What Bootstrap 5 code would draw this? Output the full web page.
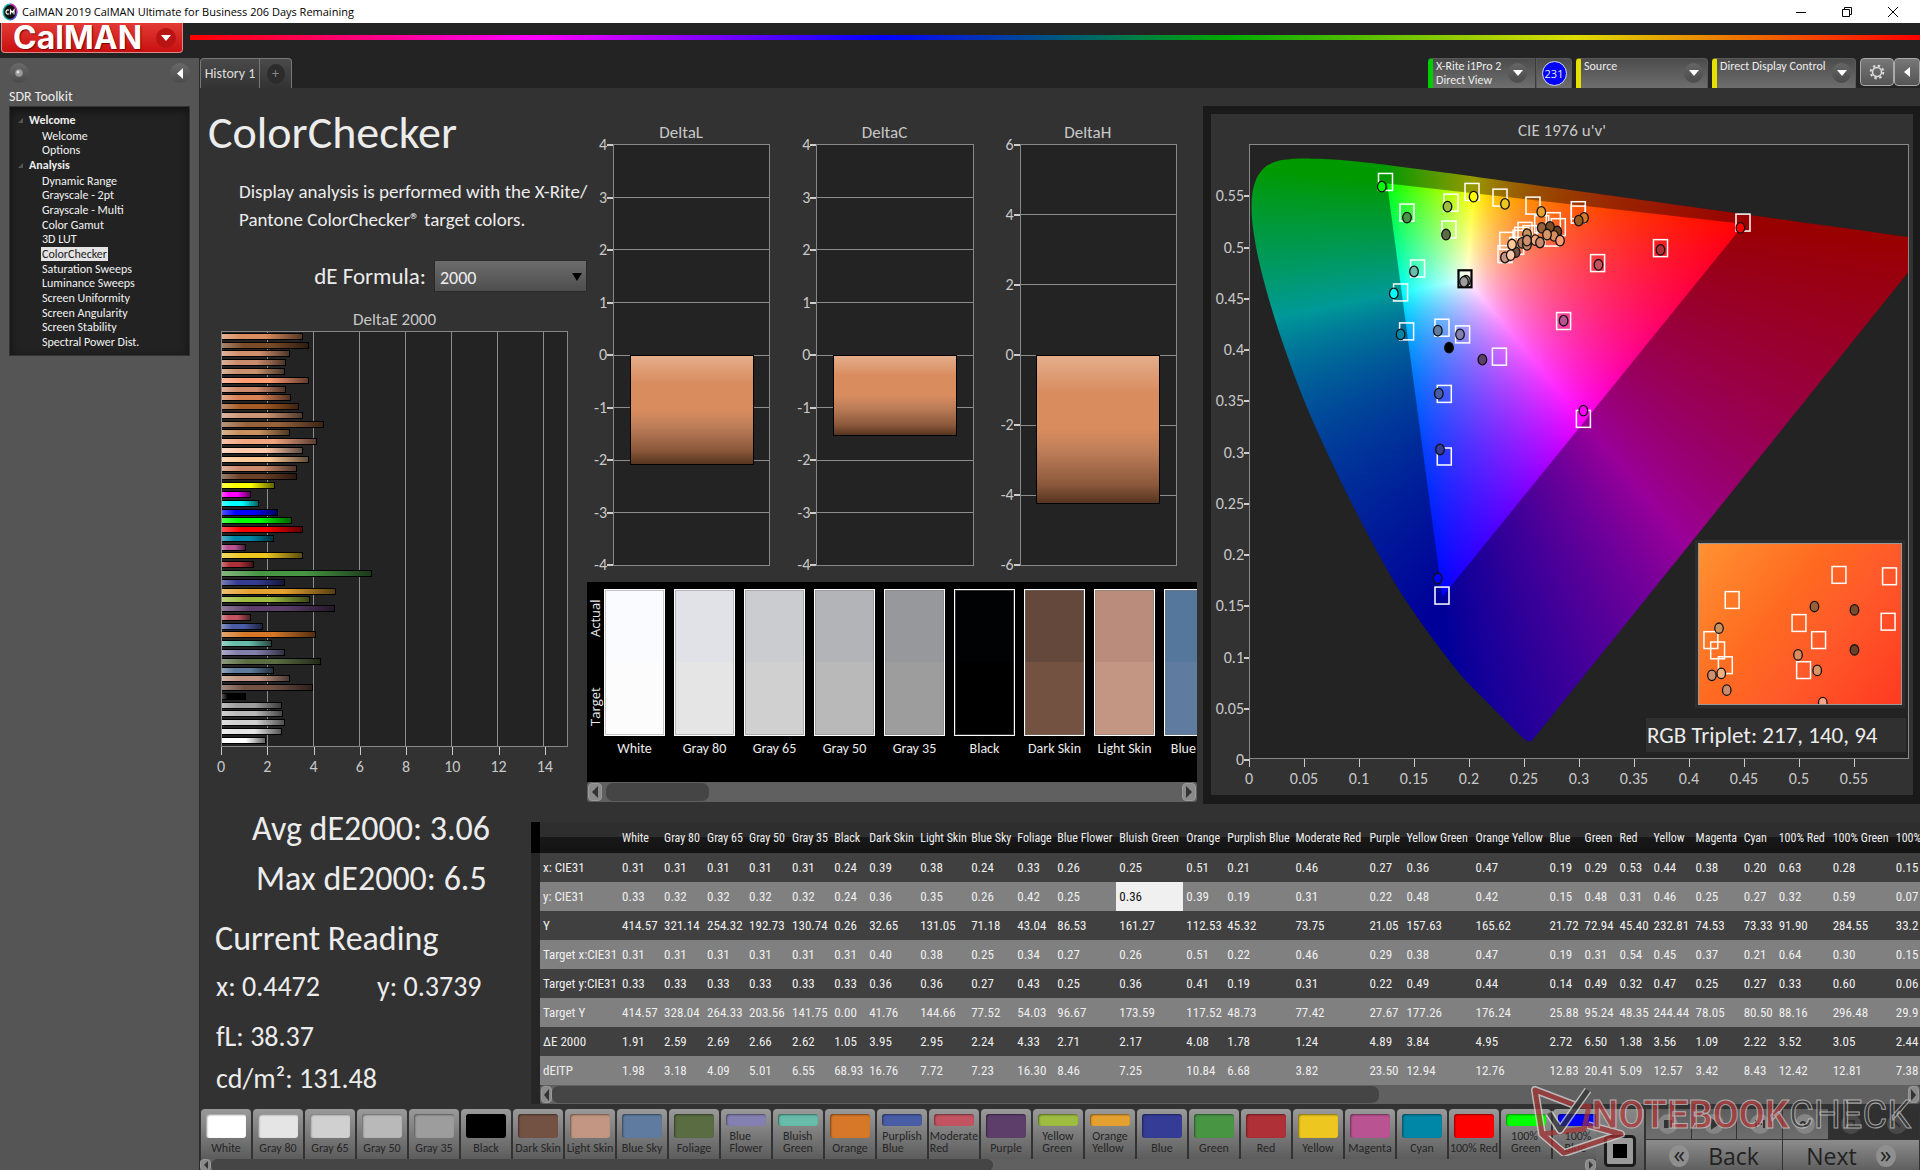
<!DOCTYPE html>
<html lang="en">
<head>
<meta charset="utf-8">
<meta name="viewport" content="width=device-width, initial-scale=1">
<title>CalMAN 2019</title>
<link href="https://cdn.jsdelivr.net/npm/bootstrap@5.3.0/dist/css/bootstrap.min.css" rel="stylesheet">
<style>
:root{--line:#888;--plot:#232323;--panel:#323232;--txt:#c8c8c8}
body{background:#232323;color:#ececec;font-family:Carlito,Lato,"Open Sans",sans-serif;font-size:16px;line-height:24px;min-height:100vh;overflow:hidden}
button{border:0;padding:0;background:none;color:inherit;font:inherit}
/* window frame */
.titlebar{height:23px;background:#fff;color:#000;font:11px/23px "Open Sans","Noto Sans",sans-serif;padding-left:2px}
.titlebar svg{display:block}
.winbtn{width:46px;height:23px}
.brandbar{height:35px}
.brand{width:182px;height:30px;margin-left:1px;border:1px solid #d88;border-top:0;border-radius:0 0 4px 4px;background:linear-gradient(#e33b36,#c8100f);font:700 32px/30px Inter,"Open Sans",sans-serif;color:#fff;padding:0 6px 0 11px;text-shadow:1px 1px 1px #700}
.brand .dot{width:20px;height:20px;background:#b81414}
.rainbow{height:5px;margin:12px 0 0 7px;background:linear-gradient(90deg,#f00,#f0f 20%,#00f 40%,#0a0 60%,#dd0 80%,#f00)}
/* sidebar */
.side{width:200px;background:#555;border-right:1px solid #2a2a2a}
.side .rnd{width:20px;height:20px;background:linear-gradient(#6a6a6a,#4a4a4a)}
.sidehead{height:29px;padding:5px 9px 0}
.sidename{font-size:14px;line-height:19px;padding-left:9px}
.tree{margin:0 9px;height:250px;background:#222;border:1px solid #333;box-shadow:inset 0 3px 8px #111;padding:6px 0 6px 19px;font-size:12px}
.tree a{color:#f2f2f2;text-decoration:none;display:block;width:max-content;line-height:14px;margin-left:12px;padding:0 1px}
.tree a.on{background:#e4e4e4;color:#222}
.tree b{line-height:15px;font-weight:700;font-size:12px;display:flex;align-items:center}
.tree b svg{margin-left:-11px;margin-right:6px}
/* tabs and devices */
.tabbar{height:30px;background:#232323}
.htab{border:1px solid #777;border-bottom:0;border-radius:4px 4px 0 0;background:linear-gradient(#4a4a4a,#333);font-size:14px;color:#ddd}
.htab button+button{border-left:1px solid #777;width:32px}
.htab button:first-child{width:58px}
.plus{width:18px;height:20px;background:#2c2c2c;color:#888;line-height:20px}
.dev{height:30px;border-radius:4px 4px 0 0;border:1px solid #5a5a5a;border-bottom:0;border-left:5px solid #e6e000;background:linear-gradient(#4c4c4c,#6e6e6e);font-size:12px;line-height:14px;padding-left:3px;text-align:left}
.dev.g{border-left-color:#0c0;border-radius:4px 0 0 0;border-right-color:#3a3a3a}
.dev.num{border-left:1px solid #5a5a5a;border-radius:0 4px 0 0}
.drop{width:19px;height:20px;border-radius:50%;background:linear-gradient(#666,#4a4a4a)}
.cnt{width:25px;height:25px;border-radius:50%;background:#00f;border:1px solid #ddd;font:11px/23px "Open Sans",sans-serif;text-align:center}
.gear{height:28px;border:1px solid #aaa;border-radius:4px;background:linear-gradient(#777,#555)}
/* work area */
.work{background:var(--panel)}
.colA{flex:387 1 0;min-width:0}.colB{flex:616 1 0;min-width:0}.colC{flex:717 1 0;min-width:0}
h1{font-size:46px;line-height:56px;font-weight:400;margin:0}
.desc{font-size:19px;line-height:28px;padding:18px 0 0 39px;margin:0;white-space:nowrap}
.formula{height:32px;margin-top:26px}
.formula label{font-size:23px;line-height:32px}
.formula select{width:153px;height:32px;font-size:18px;line-height:24px;color:#eee;border:1px solid #2a2a2a;border-radius:0;padding:4px 5px 0;appearance:none;background:linear-gradient(#6c6c6c,#4e4e4e)}
.formula .arr{right:5px;top:13px}
.ctitle{font-size:17px;line-height:22px;color:var(--txt);text-align:center}
.plot{border:1px solid var(--line);background:var(--plot);position:relative}
.deplot{height:416px}
.deplot .gcell+.gcell{border-left:1px solid #8d8d8d}
.bars{inset:0 0 1px 0}
.bar{height:7px;border:1px solid #000;border-left:0}
.shade{background-image:linear-gradient(90deg,rgba(255,255,255,.32),transparent 25%,transparent 55%,rgba(0,0,0,.62))}
.xax{color:var(--txt)}
.xax .cell{flex:2 1 0;min-width:0}.xax .half{flex:1 1 0}
.xax i{display:block;width:1px;height:8px;background:#ccc}
.xax span{display:block;text-align:center;margin-left:-100%;width:200%}
.vplot{height:422px}
.vax{width:21px;margin:-11px 0;color:var(--txt);text-align:right}
.vax div{display:flex;align-items:center;justify-content:flex-end}
.vax i{width:6px;height:2px;background:#ccc}
.vgrid>div{flex:1}.vgrid>div+div{border-top:1px solid #8d8d8d}
.vbar{left:10%;width:80%;top:50%;border:1px solid #000;background:linear-gradient(#e4ae8c,#d98c5e 25%,#d98c5e 50%,#bb7c58 66%,#8a573a 88%,#55341f)}
/* swatch strip */
.strip{height:200px;background:#000;font-size:14px}
.strip .vert{writing-mode:vertical-rl;transform:rotate(180deg);font:13px/16px "Open Sans",sans-serif;width:17px;height:147px;margin-top:7px;padding:10px 0;flex:none}
.sw{width:70px;flex:none}
.sw div{width:61px;height:147px;border:1px solid #fff;outline:1px solid rgba(120,120,120,.4);outline-offset:-2px}
.sw span{display:block;width:61px;text-align:center;line-height:26px;white-space:nowrap}
.sbar{background:#606060;border-radius:3px}
.sbar button{width:14px;background:#8a8a8a;border:1px solid #999;border-radius:4px;flex:none;display:flex;align-items:center;justify-content:center}
.sbar .thumb{background:#454545;border-radius:7px}
/* chromaticity */
.cie{background:#1a1a1a;padding:8px 7px 9px 8px}
.cie .inner{background:var(--panel);padding-top:6px}
.cie .ctitle{padding-bottom:2px}
.cieplot{height:615px}
.cieplot canvas,.cieplot svg.ov{position:absolute;left:0;top:0;width:100%;height:100%}
.yax{width:38px;color:var(--txt)}
.yax div{flex:1;display:flex;align-items:flex-end;justify-content:flex-end}
.yax span{margin-bottom:-13px;display:flex;align-items:center}
.yax i{width:5px;height:2px;background:#ccc}
.inset-map{right:3px;bottom:50px;width:210px;height:168px;border:3px solid #2d2d2d}
.inset-map svg{display:block;width:100%;height:100%;border:1px solid #999;background:linear-gradient(128deg,#ff9232,#ff6a20 40%,#ff5a2a 62%,#ff3a20)}
.triplet{right:2px;bottom:6px;width:260px;height:34px;background:#303030;font-size:23px;line-height:34px;padding-left:1px}
/* readings */
.stats{flex:331 1 0;min-width:0}
.stats .big{font-size:34px}.stats .mid{font-size:28px}
.lh50{line-height:50px}.lh42{line-height:42px}
/* table */
.tblwrap{flex:1389 1 0;min-width:0}
.gut{width:9px;flex:none;background:#262626}.gut div{height:31px;background:#000}
.readings{table-layout:fixed;width:100%;border-collapse:collapse;font:13px/28px "Roboto Condensed",Carlito,Roboto,sans-serif;color:#eee}
.readings th,.readings td{padding:0 0 0 3px;white-space:nowrap;overflow:hidden;font-weight:400;height:29px}
.readings thead th{height:31px;background:linear-gradient(#2e2e2e 50%,#181818 50%,#131313);line-height:30px;font-size:12px}
.readings tbody tr{background:#404040}.readings tbody tr:nth-child(even){background:#808080}
.readings td.cur{background:#f0f0f0;color:#111}
/* pattern buttons */
.pat{width:50px;height:50px;flex:none;border-radius:4px 4px 0 0;background:linear-gradient(#9a9a9a,#5c5c5c);color:#262626;font-size:12px;line-height:12px;padding-top:5px;white-space:nowrap;overflow:hidden}
.pat i{display:block;width:40px;height:24px;border-radius:3px;box-shadow:inset 1px 1px 2px rgba(0,0,0,.45)}
.pat.two i{height:12px}
.pat.two{text-align:left}
.pat span{display:block;padding-top:4px;line-height:12px}
.ctl{width:324px;background:#333}
.act{flex:1;height:30px;background:linear-gradient(#5e5e5e,#6e6e6e);border-right:1px solid #333}
.act.off{background:#303030}
.act span{width:20px;height:20px;background:#858585;border-radius:50%}
.nav2{height:31px;flex:1;gap:19px;background:linear-gradient(#8c8c8c,#5e5e5e);color:#222;font:23px/30px "Open Sans",sans-serif;border-right:1px solid #333}
.nav2 .ch{width:20px;height:22px;border-radius:50%;background:#8f8f8f;line-height:18px}
.wm{right:9px;bottom:15px;opacity:.72;pointer-events:none}
.wm svg{margin-right:-36px}
.wm span{font-size:38px;line-height:40px;margin-top:9px;font-family:Roboto,"Open Sans",sans-serif;-webkit-text-stroke:1px #ccc}
.wm .nb{font-weight:700;color:#b4383a}
.wm .ck{color:#333}
</style>
<script src="https://cdn.jsdelivr.net/npm/bootstrap@5.3.0/dist/js/bootstrap.bundle.min.js"></script>
</head>
<body class="d-flex flex-column">
<header>
  <div class="titlebar d-flex align-items-center">
    <svg width="16" height="18" viewBox="0 0 16 18"><ellipse cx="8" cy="9" rx="7.5" ry="8.5" fill="#17b3a0"/><path d="M8 .5A7.5 8.5 0 0 1 15.500 9H8z" fill="#d22bb0"/><path d="M8 17.500A7.500 8.500 0 0 0 15.500 9H8z" fill="#6a49d8"/><ellipse cx="8" cy="9" rx="6" ry="7" fill="#111"/><path d="M7 7.300a2 2 0 1 0 0 3.400M8.500 11.500V7l1.800 2.500L12 7v4.500" fill="none" stroke="#fff" stroke-width="1.200"/></svg>
    <span class="ms-1 flex-grow-1">CalMAN 2019 CalMAN Ultimate for Business 206 Days Remaining</span>
    <button class="winbtn" aria-label="Minimize"><svg class="mx-auto" width="10" height="10"><path d="M0 5.500h10" stroke="#000"/></svg></button>
    <button class="winbtn" aria-label="Restore"><svg class="mx-auto" width="10" height="10"><path d="M.5 2.500h7v7h-7zM2.500 2.500v-2h7v7h-2" fill="none" stroke="#000"/></svg></button>
    <button class="winbtn me-1" aria-label="Close"><svg class="mx-auto" width="10" height="10"><path d="M0 0l10 10M10 0L0 10" stroke="#000"/></svg></button>
  </div>
  <div class="brandbar d-flex">
    <button class="brand d-flex justify-content-between align-items-center">CalMAN<span class="dot rounded-circle d-flex align-items-center justify-content-center"><svg width="10" height="6"><path d="M0 0h10L5 6z" fill="#fff"/></svg></span></button>
    <div class="rainbow flex-grow-1"></div>
  </div>
</header>
<div class="d-flex flex-grow-1">
  <nav class="side flex-shrink-0">
    <div class="sidehead d-flex justify-content-between">
      <button class="rnd rounded-circle d-flex align-items-center justify-content-center" aria-label="Status"><svg width="8" height="8"><circle cx="4" cy="4" r="3.800" fill="#999"/><circle cx="3" cy="3" r="1.500" fill="#ddd"/></svg></button>
      <button class="rnd rounded-circle d-flex align-items-center justify-content-center" aria-label="Collapse"><svg width="6" height="11"><path d="M6 0v11L0 5.500z" fill="#fff"/></svg></button>
    </div>
    <div class="sidename">SDR Toolkit</div>
    <div class="tree d-flex flex-column justify-content-between" id="tree"></div>
  </nav>
  <main class="flex-grow-1 d-flex flex-column" style="min-width:0">
    <div class="tabbar d-flex justify-content-between">
      <div class="htab d-flex"><button>History 1</button><button aria-label="Add tab" class="d-flex align-items-center justify-content-center"><span class="plus rounded-circle">+</span></button></div>
      <div class="d-flex gap-1">
        <div class="d-flex">
          <button class="dev g d-flex" style="width:108px"><span class="flex-grow-1">X-Rite i1Pro 2<br>Direct View</span><span class="drop mt-1 me-2 d-flex align-items-center justify-content-center"><svg width="10" height="6"><path d="M0 0h10L5 6z" fill="#fff"/></svg></span></button>
          <div class="dev num d-flex align-items-center justify-content-center p-0" style="width:36px"><span class="cnt">231</span></div>
        </div>
        <button class="dev d-flex" style="width:132px"><span class="flex-grow-1">Source</span><span class="drop mt-1 me-1 d-flex align-items-center justify-content-center"><svg width="10" height="6"><path d="M0 0h10L5 6z" fill="#fff"/></svg></span></button>
        <button class="dev d-flex" style="width:144px"><span class="flex-grow-1 text-nowrap">Direct Display Control</span><span class="drop mt-1 me-1 d-flex align-items-center justify-content-center"><svg width="10" height="6"><path d="M0 0h10L5 6z" fill="#fff"/></svg></span></button>
        <div class="d-flex">
          <button class="gear d-flex align-items-center justify-content-center" style="width:34px" aria-label="Settings"><svg width="16" height="16" viewBox="0 0 16 16" fill="none" stroke="#ddd"><circle cx="8" cy="8" r="4.500" stroke-width="1.500"/><circle cx="8" cy="8" r="6.300" stroke-width="2" stroke-dasharray="2.400 2.550"/></svg></button>
          <button class="gear d-flex align-items-center justify-content-center" style="width:26px" aria-label="Hide panel"><svg width="6" height="10"><path d="M6 0v10L0 5z" fill="#fff"/></svg></button>
        </div>
      </div>
    </div>
    <div class="work flex-grow-1 d-flex flex-column">
      <div class="d-flex">
        <section class="colA d-flex flex-column" style="padding-top:16px">
          <h1 class="ps-2">ColorChecker</h1>
          <p class="desc">Display analysis is performed with the X-Rite/<br>Pantone ColorChecker® target colors.</p>
          <div class="formula d-flex justify-content-end gap-2 position-relative"><label for="de">dE Formula:</label><select id="de"><option>2000</option></select><svg class="arr position-absolute" width="10" height="8"><path d="M0 0h10L5 8z" fill="#000"/></svg></div>
          <div style="padding:17px 19px 0 21px">
            <div class="ctitle">DeltaE 2000</div>
            <div class="plot deplot d-flex" id="deplot"></div>
            <div class="xax d-flex" id="dex"></div>
          </div>
        </section>
        <section class="colB"><div style="padding:34px 6px 0 0">
          <div class="d-flex" id="deltas"></div>
          <div class="strip d-flex overflow-hidden" style="margin-top:16px" id="strip">
            <div class="vert d-flex justify-content-between"><span>Target</span><span>Actual</span></div>
          </div>
          <div class="sbar d-flex" style="height:20px;padding:1px"><button aria-label="Scroll left"><svg width="6" height="12"><path d="M6 0v12L0 6z" fill="#333"/></svg></button><div class="thumb ms-1" style="width:17%"></div><button class="ms-auto" aria-label="Scroll right"><svg width="6" height="12"><path d="M0 0v12l6-6z" fill="#333"/></svg></button></div>
        </div></section>
        <section class="colC" style="padding-top:18px">
          <div class="cie"><div class="inner">
            <div class="ctitle">CIE 1976 u'v'</div>
            <div class="d-flex" style="padding-right:4px">
              <div class="yax d-flex flex-column-reverse" id="ciey"></div>
              <div class="plot cieplot flex-grow-1" id="cieplot">
                <canvas id="cv" width="658" height="614"></canvas>
                <svg class="ov" viewBox="0 0 658 614" preserveAspectRatio="none" id="ov"></svg>
                <div class="inset-map position-absolute"><svg viewBox="0 0 204 162" preserveAspectRatio="none" id="ins"></svg></div>
                <div class="triplet position-absolute">RGB Triplet: 217, 140, 94</div>
              </div>
            </div>
            <div class="xax d-flex" id="ciex" style="margin-left:38px;padding:0 4px 4px 0"></div>
          </div></div>
        </section>
      </div>
      <div class="d-flex flex-grow-1">
        <section class="stats">
          <div class="big lh50" style="padding-left:52px">Avg dE2000: 3.06</div>
          <div class="big lh50" style="padding-left:56px">Max dE2000: 6.5</div>
          <div class="big lh42" style="padding:14px 0 6px 15px">Current Reading</div>
          <div class="mid lh42 d-flex ps-3"><span style="width:161px">x: 0.4472</span><span>y: 0.3739</span></div>
          <div class="mid lh42 ps-3 pt-2">fL: 38.37</div>
          <div class="mid lh42 ps-3">cd/m²: 131.48</div>
        </section>
        <section class="tblwrap d-flex" style="padding-top:18px">
          <div class="gut"><div></div></div>
          <div class="flex-grow-1" style="min-width:0">
            <table class="readings" id="tbl"></table>
            <div class="sbar d-flex" style="height:19px;padding:1px"><button style="width:11px" aria-label="Scroll left"><svg width="5" height="12"><path d="M5 0v12L0 6z" fill="#333"/></svg></button><div class="thumb" style="width:60%"></div><button class="ms-auto" style="width:11px" aria-label="Scroll right"><svg width="5" height="12"><path d="M0 0v12l5-6z" fill="#333"/></svg></button></div>
          </div>
        </section>
      </div>
      <div class="d-flex position-relative" style="padding-top:5px">
        <div class="flex-grow-1" style="min-width:0">
          <div class="d-flex overflow-hidden" style="gap:2px;padding-left:1px" id="pats"></div>
          <div class="sbar d-flex" style="height:12px"><button style="width:11px" aria-label="Scroll left"><svg width="4" height="8"><path d="M4 0v8L0 4z" fill="#333"/></svg></button><div class="thumb" style="width:56%"></div><button class="ms-auto" style="width:11px" aria-label="Scroll right"><svg width="4" height="8"><path d="M0 0v8l4-4z" fill="#333"/></svg></button></div>
        </div>
        <div class="ctl d-flex flex-shrink-0">
          <button class="d-flex align-items-end justify-content-center pb-1" style="width:48px;background:linear-gradient(#888,#5a5a5a)" aria-label="Pattern window"><svg width="32" height="32"><rect x="1.500" y="1.500" width="29" height="29" rx="3" fill="#9a9a9a" stroke="#1a1a1a" stroke-width="3"/><rect x="9" y="9" width="14" height="14" fill="#000"/></svg></button>
          <div class="flex-grow-1" style="padding-left:2px">
            <div class="d-flex" id="acts"></div>
            <div class="d-flex" style="margin-top:1px">
              <button class="nav2 d-flex align-items-center justify-content-center"><span class="ch">«</span>Back</button>
              <button class="nav2 d-flex align-items-center justify-content-center">Next<span class="ch">»</span></button>
            </div>
          </div>
        </div>
        <div class="wm position-absolute d-flex align-items-start">
          <svg width="96" height="70" viewBox="0 0 96 70"><g fill="none" stroke-linejoin="round"><path d="M46 20L4 4l7 44 22 19 57-19-33-9" stroke="#ddd" stroke-width="8"/><path d="M46 20L4 4l7 44 22 19 57-19-33-9M11 48l42-5 5-23-12 0" stroke="#a83234" stroke-width="5"/><path d="M18 27l11 17L57 4" stroke="#ddd" stroke-width="8"/><path d="M18 27l11 17L57 4" stroke="#333" stroke-width="5"/></g></svg>
          <span class="nb">NOTEBOOK</span><span class="ck">CHECK</span>
        </div>
      </div>
    </div>
  </main>
</div>
<script>
const $=id=>document.getElementById(id);
// navigation tree
$('tree').innerHTML=[['Welcome'],'Welcome','Options',['Analysis'],'Dynamic Range','Grayscale - 2pt','Grayscale - Multi','Color Gamut','3D LUT','ColorChecker','Saturation Sweeps','Luminance Sweeps','Screen Uniformity','Screen Angularity','Screen Stability','Spectral Power Dist.'].map(t=>Array.isArray(t)?`<b><svg width="5" height="5"><path d="M5 0v5H0z" fill="#555"/></svg>${t[0]}</b>`:`<a href="#"${t==='ColorChecker'?' class="on"':''}>${t}</a>`).join('');
// DeltaE bars
const de=[[3.5,'#d98c5e'],[3.8,'#7a4b28'],[2.95,'#cf8f6c'],[2.77,'#c98c6c'],[2.72,'#c8916c'],[3.77,'#ff9c74'],[2.77,'#cf8c6c'],[3.02,'#d98256'],[3.33,'#a35a24'],[3.5,'#cc9474'],[4.43,'#96623a'],[2.95,'#c8915e'],[4.12,'#f0a480'],[3.5,'#ffc8aa'],[3.8,'#ffc896'],[3.25,'#cc8a6c'],[3.25,'#6b4026'],[2.29,'#ffff00'],[1.28,'#ff00ff'],[1.63,'#00ffff'],[2.45,'#0000ff'],[3.03,'#00ff00'],[3.51,'#ff0000'],[2.24,'#0086a6'],[1.06,'#b95392'],[3.54,'#edc720'],[1.37,'#b03038'],[6.5,'#489544'],[2.72,'#343c93'],[4.97,'#e5a12f'],[3.84,'#9dbc40'],[4.9,'#5d3e6b'],[1.24,'#c35360'],[1.8,'#495ca6'],[4.07,'#d67828'],[2.16,'#67bdaa'],[2.72,'#8480ae'],[4.3,'#5a6c42'],[2.24,'#5f7b9d'],[2.95,'#c29682'],[3.94,'#735244'],[1.06,'#000000'],[2.6,'#9e9e9e'],[2.65,'#b9b9b9'],[2.72,'#d0d0d0'],[2.6,'#e5e5e5'],[1.91,'#ffffff']];
let g='';for(let i=0;i<8;i++)g+=`<div class="gcell" style="flex:${i<7?2:1} 1 0"></div>`;
$('deplot').innerHTML=g+'<div class="bars position-absolute d-flex flex-column justify-content-around">'+de.map(([v,c])=>`<div class="bar shade" style="width:${v/15*100}%;background-color:${c}"></div>`).join('')+'</div>';
$('dex').innerHTML=[0,2,4,6,8,10,12,14].map(n=>`<div class="cell${n===14?' half':''}"><i></i><span${n===14?' style="width:400%;margin-left:-200%"':' style="width:100%;margin-left:-50%"'}>${n}</span></div>`).join('');
// DeltaL / C / H
$('deltas').innerHTML=[['DeltaL',[4,3,2,1,0,-1,-2,-3,-4],2.1],['DeltaC',[4,3,2,1,0,-1,-2,-3,-4],1.55],['DeltaH',[6,4,2,0,-2,-4,-6],4.26]].map(([t,l,v])=>`<div style="flex:1;padding:0 20px 0 5px"><div class="ctitle">${t}</div><div class="d-flex"><div class="vax d-flex flex-column justify-content-between">${l.map(n=>`<div>${n}<i></i></div>`).join('')}</div><div class="plot vplot vgrid flex-grow-1 d-flex flex-column">${'<div></div>'.repeat(l.length-1)}<span class="vbar position-absolute" style="height:${v/l[0]*50}%"></span></div></div></div>`).join('');
// actual / target strip
$('strip').insertAdjacentHTML('beforeend',[['White','#fafbff','#fcfcfc'],['Gray 80','#e1e2e8','#e5e5e5'],['Gray 65','#cbccd0','#d0d0d0'],['Gray 50','#b3b4b8','#b9b9b9'],['Gray 35','#97989b','#9d9d9d'],['Black','#010203','#000'],['Dark Skin','#64483c','#735242'],['Light Skin','#b98c7c','#c29682'],['Blue Sky','#54779b','#5f7b9f']].map(([n,a,t])=>`<div class="sw" style="padding-top:7px"><div style="background:linear-gradient(${a} 50%,${t} 50%)"></div><span>${n}</span></div>`).join(''));
// chromaticity axes
const tk=[0,.05,.1,.15,.2,.25,.3,.35,.4,.45,.5,.55];
$('ciey').innerHTML=tk.map(n=>`<div><span>${n}<i></i></span></div>`).join('');
$('ciex').innerHTML=tk.map(n=>`<div class="cell"><i></i><span style="width:100%;margin-left:-50%">${n}</span></div>`).join('');
// chromaticity diagram
(function(){
 const W=658,H=614,cv=$('cv'),ctx=cv.getContext('2d');
 const loc=[[.1741,.005],[.1714,.0051],[.1689,.0069],[.1644,.0109],[.1566,.0177],[.144,.0297],[.1241,.0578],[.1096,.0868],[.0913,.1327],[.0687,.2007],[.0454,.295],[.0235,.4127],[.0082,.5384],[.0039,.6548],[.0139,.7502],[.0389,.812],[.0743,.8338],[.1142,.8262],[.1547,.8059],[.2296,.7543],[.3016,.6923],[.3731,.6245],[.4441,.5547],[.5125,.4866],[.5752,.4242],[.627,.3725],[.6658,.334],[.6915,.3083],[.719,.2809],[.7347,.2653]];
 const P=(u,v)=>[u/.6*W,H-v/.6*H];
 const layer=k=>{const c=document.createElement('canvas');c.width=W;c.height=H;const x=c.getContext('2d'),im=x.createImageData(W,H),d=im.data;
  for(let j=0;j<H;j++)for(let i=0;i<W;i++){const u=(i+.5)/W*.6,v=(H-j-.5)/H*.6,q=6*u-16*v+12,X=9*u/q,y=4*v/q,Z=1-X-y;
   const c3=[3.2406*X-1.5372*y-.4986*Z,-.9689*X+1.8758*y+.0415*Z,.0557*X-.204*y+1.057*Z].map(t=>Math.max(t,0));
   const m=Math.max(...c3),o=(j*W+i)*4;for(let n=0;n<3;n++)d[o+n]=255*k*Math.pow(c3[n]/m,1/1.2);d[o+3]=255;}
  x.putImageData(im,0,0);return c;};
 const clip=(pts,img)=>{ctx.save();ctx.beginPath();pts.forEach((p,i)=>i?ctx.lineTo(...p):ctx.moveTo(...p));ctx.closePath();ctx.clip();ctx.drawImage(img,0,0);ctx.restore();};
 const L=loc.map(([x,y])=>{const q=-2*x+12*y+3;return P(4*x/q,9*y/q);}),S=[];
 for(let i=0;i<L.length-1;i++){const a=L[Math.max(i-1,0)],b=L[i],c=L[i+1],e=L[Math.min(i+2,L.length-1)];
  for(let t=0;t<1;t+=.125)S.push([0,1].map(n=>.5*(2*b[n]+(c[n]-a[n])*t+(2*a[n]-5*b[n]+4*c[n]-e[n])*t*t+(3*b[n]-a[n]-3*c[n]+e[n])*t*t*t)));}
 S.push(L[L.length-1]);
 clip(S,layer(.6));
 clip([P(.4507,.5229),P(.125,.5625),P(.1754,.1579)],layer(1));
 const sq=a=>a.map(([x,y])=>`<rect x="${x-7}" y="${y-8.5}" width="14" height="17" fill="none" stroke="#fff" stroke-width="1.5"/>`).join('');
 const ci=a=>a.map(([x,y,c])=>`<ellipse cx="${x}" cy="${y}" rx="4.300" ry="5.300" fill="${c}" stroke="#111" stroke-width="1.300"/>`).join('');
 $('ov').innerHTML=sq([[135.5,37],[157,67.7],[201,57.7],[222,47],[250,52.7],[199,84.7],[167.6,123.7],[150.6,147.7],[156.6,186.7],[192,183],[212.6,189.7],[249.4,212],[194.3,249.3],[283,60.7],[328.3,65.3],[328.3,69.7],[493,77.7],[410.5,103.3],[347.6,118.3],[313.6,176.3],[194.3,312],[192,451.3],[333.4,274.3],[256.7,96],[255,109.3],[275,86],[303.3,76.3],[308.3,82.3],[291.7,79.3],[266.7,101],[270,94],[271.7,91],[301.7,92.7],[280,89.3]])
 +'<rect x="208.5" y="125.500" width="13" height="17" fill="none" stroke="#000" stroke-width="2.200"/>'
 +ci([[131.8,41.7,'#00ff00'],[157,72.7,'#489544'],[197.5,61.7,'#9dbc40'],[223.6,51.7,'#ffff00'],[255,59,'#edc720'],[196,89.7,'#5a6c42'],[164,126.7,'#67bdaa'],[143.8,148.7,'#00ffff'],[150.6,189.7,'#0086a6'],[187.8,186,'#5f7b9d'],[210,189.7,'#8480ae'],[199,203,'#000'],[232.4,215,'#5d3e6b'],[188.8,249,'#495ca6'],[348.5,120,'#c35360'],[410.5,105,'#b03038'],[490.4,83,'#f00'],[313.6,176,'#b95392'],[216,136,'#9e9e9e'],[214,137,'#9e9e9e'],[190,305,'#343c93'],[187.8,434,'#0000ff'],[333.4,266,'#f0f'],[291.3,67,'#e5a12f'],[334,73,'#d67828'],[328.7,75.7,'#9c5a20'],[291.7,83,'#96603a'],[307.3,86.7,'#6b4026'],[300,82,'#7a4b28'],[304,91,'#d98c5e'],[297,89.7,'#d99468'],[310,95.7,'#ff9c74'],[277,89.3,'#c8915e'],[272,98,'#b07c5a'],[277,100,'#c08860'],[285.3,95.3,'#f0a880'],[277,95.7,'#cf9070'],[290,97.7,'#cc8a6c'],[265.7,107.3,'#735244'],[262,99.7,'#ffc896'],[255,112.7,'#c29682'],[260.7,110.3,'#ffc8aa']]);
 $('ins').innerHTML=sq([[141.4,31.3],[192.4,32.7],[33.5,56.7],[101,80],[191,78.7],[12,97.3],[18.8,107.7],[26.6,122.7],[120.8,97.3],[105.6,127.7]])+ci([[116.6,63.3,'#96603a'],[157,66.7,'#7a4b28'],[157,107.3,'#6b4026'],[20.2,85.3,'#c8915e'],[100,112.3,'#d98c5e'],[119.4,128,'#d99468'],[13,133,'#cf9070'],[22.5,131,'#f0b080'],[28,148,'#cc8a6c'],[125,160.7,'#ffa484']]);
})();
// readings table
const cols=['','White','Gray 80','Gray 65','Gray 50','Gray 35','Black','Dark Skin','Light Skin','Blue Sky','Foliage','Blue Flower','Bluish Green','Orange','Purplish Blue','Moderate Red','Purple','Yellow Green','Orange Yellow','Blue','Green','Red','Yellow','Magenta','Cyan','100% Red','100% Green','100% Blue'];
const cw=[79,42,43,42,43,42,35,51,51,46,40,62,67,41,68,74,37,69,74,35,35,34,42,48,35,54,63];
const rows=`x: CIE31|0.31|0.31|0.31|0.31|0.31|0.24|0.39|0.38|0.24|0.33|0.26|0.25|0.51|0.21|0.46|0.27|0.36|0.47|0.19|0.29|0.53|0.44|0.38|0.20|0.63|0.28|0.15
y: CIE31|0.33|0.32|0.32|0.32|0.32|0.24|0.36|0.35|0.26|0.42|0.25|0.36|0.39|0.19|0.31|0.22|0.48|0.42|0.15|0.48|0.31|0.46|0.25|0.27|0.32|0.59|0.07
Y|414.57|321.14|254.32|192.73|130.74|0.26|32.65|131.05|71.18|43.04|86.53|161.27|112.53|45.32|73.75|21.05|157.63|165.62|21.72|72.94|45.40|232.81|74.53|73.33|91.90|284.55|33.2
Target x:CIE31|0.31|0.31|0.31|0.31|0.31|0.31|0.40|0.38|0.25|0.34|0.27|0.26|0.51|0.22|0.46|0.29|0.38|0.47|0.19|0.31|0.54|0.45|0.37|0.21|0.64|0.30|0.15
Target y:CIE31|0.33|0.33|0.33|0.33|0.33|0.33|0.36|0.36|0.27|0.43|0.25|0.36|0.41|0.19|0.31|0.22|0.49|0.44|0.14|0.49|0.32|0.47|0.25|0.27|0.33|0.60|0.06
Target Y|414.57|328.04|264.33|203.56|141.75|0.00|41.76|144.66|77.52|54.03|96.67|173.59|117.52|48.73|77.42|27.67|177.26|176.24|25.88|95.24|48.35|244.44|78.05|80.50|88.16|296.48|29.9
ΔE 2000|1.91|2.59|2.69|2.66|2.62|1.05|3.95|2.95|2.24|4.33|2.71|2.17|4.08|1.78|1.24|4.89|3.84|4.95|2.72|6.50|1.38|3.56|1.09|2.22|3.52|3.05|2.44
dEITP|1.98|3.18|4.09|5.01|6.55|68.93|16.76|7.72|7.23|16.30|8.46|7.25|10.84|6.68|3.82|23.50|12.94|12.76|12.83|20.41|5.09|12.57|3.42|8.43|12.42|12.81|7.38`.split('\n').map(r=>r.split('|'));
$('tbl').innerHTML='<colgroup>'+cw.map(w=>`<col style="width:${w/1379*100}%">`).join('')+'<col></colgroup><thead><tr>'+cols.map(c=>`<th scope="col">${c}</th>`).join('')+'</tr></thead><tbody>'+rows.map((r,i)=>'<tr>'+r.map((c,j)=>j?`<td${i===1&&j===12?' class="cur"':''}>${c}</td>`:`<th scope="row">${c}</th>`).join('')+'</tr>').join('')+'</tbody>';
// pattern buttons
$('pats').innerHTML=[['White','#fff'],['Gray 80','#e5e5e5'],['Gray 65','#d0d0d0'],['Gray 50','#b9b9b9'],['Gray 35','#9d9d9d'],['Black','#000'],['Dark Skin','#735244'],['Light Skin','#c29682'],['Blue Sky','#5f7b9f'],['Foliage','#5a6c42'],['Blue<br>Flower','#8480b1'],['Bluish<br>Green','#67bdaa'],['Orange','#d67828'],['Purplish<br>Blue','#495ca6'],['Moderate<br>Red','#c35360'],['Purple','#5d3e6b'],['Yellow<br>Green','#9dbc40'],['Orange<br>Yellow','#e5a12f'],['Blue','#343c96'],['Green','#489544'],['Red','#b03038'],['Yellow','#edc720'],['Magenta','#b95392'],['Cyan','#0086a6'],['100% Red','#f00'],['100%<br>Green','#0f0'],['100%<br>Blue','#00f']].map(([n,c])=>{const t=n.includes('<');return `<button class="pat d-flex flex-column align-items-center${t?' two':''}"><i style="background-color:${c}"></i><span>${n}</span></button>`}).join('');
// transport buttons
$('acts').innerHTML=['M3 3h6v6H3z','M4 2l6 4-6 4z','M2 2v8M10 2v8M4 6h4','M2 6a2 2 0 1 1 4 0 2 2 0 1 0 4 0','M3 3h6v6','M3 3l6 6'].map((p,i)=>`<button class="act d-flex align-items-center justify-content-center${i>3?' off':''}" aria-label="Action ${i+1}"><span class="d-flex align-items-center justify-content-center"${i>3?' style="opacity:.3"':''}><svg width="12" height="12"><path d="${p}" fill="${i<2?'#333':'none'}" stroke="#333" stroke-width="2"/></svg></span></button>`).join('');
</script>
</body>
</html>
